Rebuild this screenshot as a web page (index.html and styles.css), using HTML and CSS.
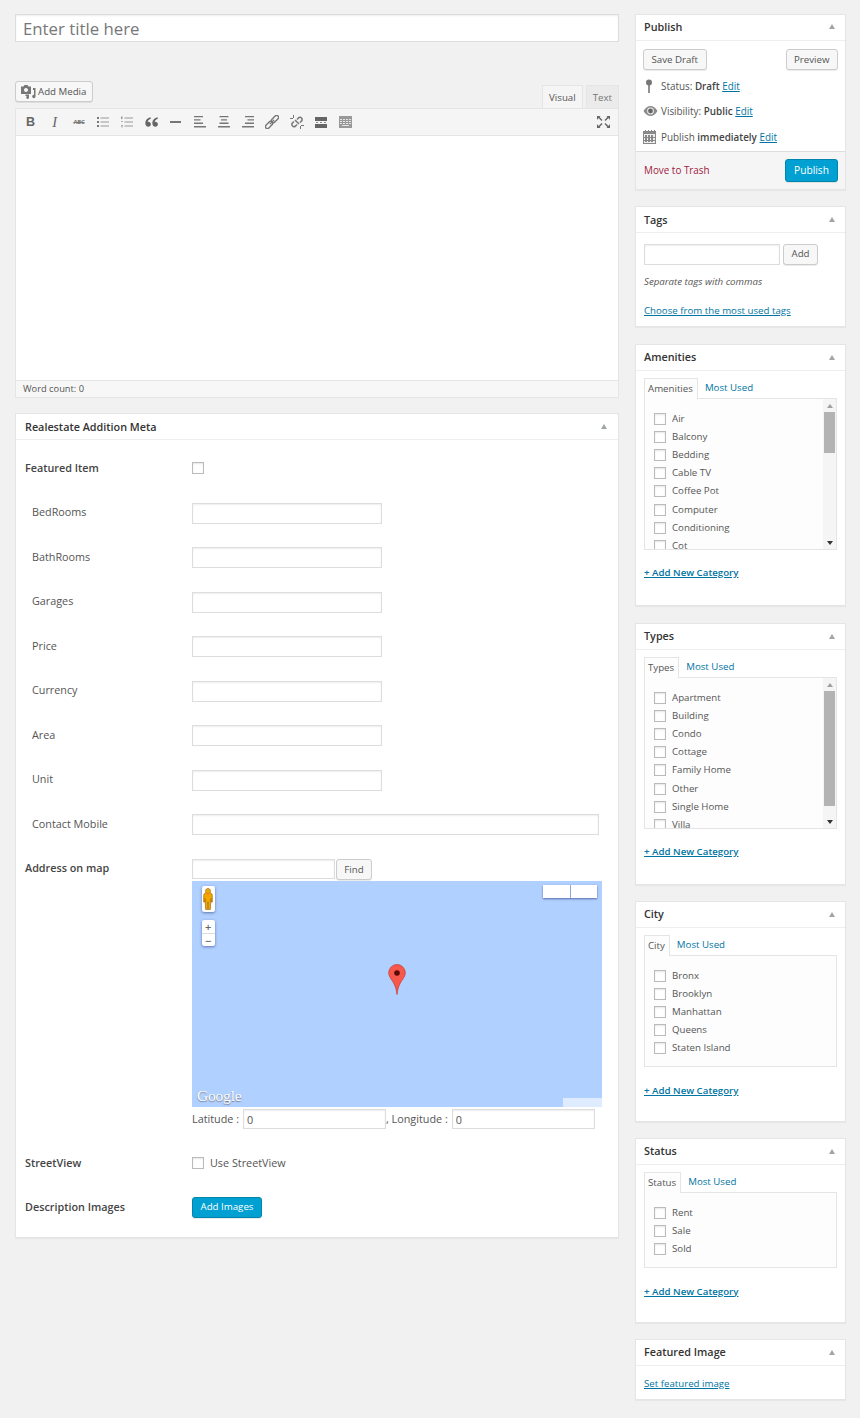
FILE: index.html
```html
<!DOCTYPE html>
<html lang="en">
<head>
<meta charset="utf-8">
<title>Add New Property</title>
<link rel="stylesheet" href="styles.css">
</head>
<body>
<div class="page">
<main class="main">
  <input class="title-input" type="text" placeholder="Enter title here">
  <div class="editor-top">
    <button class="btn media-btn"><svg class="media-icon" width="15" height="14" viewBox="0 0 15 14"><path fill="#777" fill-rule="evenodd" d="M0 1.500h2.500L3.500 0h3l1 1.500H10V9H0zM5 3a2 2 0 1 0 .01 0z"/><path fill="#777" d="M12 3h2.500v8.500a1.700 1.700 0 1 1-1.500-1.700V5h-1zM4.500 9.500h3.500v3a1.400 1.400 0 1 1-1.300-1.400V11H4.500z"/></svg>Add Media</button>
    <div class="tabs"><span class="tab tab-on">Visual</span><span class="tab">Text</span></div>
  </div>
  <section class="editor">
    <div class="toolbar">
      <span class="ti ti-b">B</span>
      <span class="ti ti-i">I</span>
      <span class="ti ti-abc">ABC</span>
      <span class="ti"><svg width="12" height="12" viewBox="0 0 12 12"><path fill="#777" d="M0 1h2v2H0zM0 5h2v2H0zM0 9h2v2H0z"/><path fill="#999" d="M3.500 1.500H12v1H3.500zM3.500 5.500H12v1H3.500zM3.500 9.500H12v1H3.500z"/></svg></span>
      <span class="ti"><svg width="12" height="12" viewBox="0 0 12 12"><path fill="#999" d="M0 .5h1.500v2.500H0zM0 5h2v.7H0zM0 9h2v.7H0zM0 10.500h2v.7H0zM3.500 1.500H12v1H3.500zM3.500 5.500H12v1H3.500zM3.500 9.500H12v1H3.500z"/></svg></span>
      <span class="ti"><svg width="13" height="10" viewBox="0 0 13 10"><path fill="#666" d="M5.500.3C2.500 1 .3 3 .3 6c0 2.300 1.200 3.700 3 3.700 1.500 0 2.600-1 2.600-2.500S4.800 4.700 3.400 4.700c-.3 0-.6 0-.8.1C3 3.500 4.200 2.500 5.900 1.800zM12.500.3C9.500 1 7.300 3 7.300 6c0 2.300 1.200 3.700 3 3.700 1.500 0 2.600-1 2.600-2.500s-1.100-2.500-2.500-2.500c-.3 0-.6 0-.8.1.4-1.300 1.600-2.300 3.300-3z"/></svg></span>
      <span class="ti"><svg width="11" height="2" viewBox="0 0 11 2"><path fill="#777" d="M0 0h11v2H0z"/></svg></span>
      <span class="ti"><svg width="12" height="12" viewBox="0 0 12 12"><path fill="#777" d="M0 0h9v1.300H0zM0 3.300h6.500v1.300H0zM0 6.600h9v1.300H0zM0 10h12v1.500H0z"/></svg></span>
      <span class="ti"><svg width="12" height="12" viewBox="0 0 12 12"><path fill="#777" d="M1.500 0h9v1.300h-9zM3 3.300h6v1.300H3zM1.500 6.600h9v1.300h-9zM0 10h12v1.500H0z"/></svg></span>
      <span class="ti"><svg width="12" height="12" viewBox="0 0 12 12"><path fill="#777" d="M3 0h9v1.300H3zM5.500 3.300H12v1.300H5.500zM3 6.600h9v1.300H3zM0 10h12v1.500H0z"/></svg></span>
      <span class="ti"><svg width="14" height="14" viewBox="0 0 14 14"><g fill="none" stroke="#777" stroke-width="1.400" transform="rotate(-45 7 7)"><rect x="-1.500" y="5" width="8.500" height="4" rx="2"/><rect x="7" y="5" width="8.500" height="4" rx="2"/><path d="M4 7h6"/></g></svg></span>
      <span class="ti"><svg width="14" height="14" viewBox="0 0 14 14"><path fill="none" stroke="#777" stroke-width="1.500" d="M7 4.500 9 2.500a2.300 2.300 0 0 1 3 3l-2 2M7 9.500 5 11.500a2.300 2.300 0 0 1-3-3l2-2M5 5 9 9"/><path fill="#777" d="M3 0h1v3H3zM0 3h3v1H0zM10 11h1v3h-1zM11 10h3v1h-3z"/></svg></span>
      <span class="ti"><svg width="12" height="11" viewBox="0 0 12 11"><path fill="#666" d="M0 0h12v4H0zM0 7h12v4H0z"/><path fill="#888" d="M1 5h2v1H1zM5 5h2v1H5zM9 5h2v1H9z"/></svg></span>
      <span class="ti"><svg width="13" height="12" viewBox="0 0 13 12"><path fill="#999" d="M0 0h13v12H0z"/><path fill="#e5e5e5" d="M1 3h2v1H1zM4 3h2v1H4zM7 3h2v1H7zM10 3h2v1h-2zM1 5h2v1H1zM4 5h2v1H4zM7 5h2v1H7zM10 5h2v1h-2zM1 7h2v1H1zM4 7h2v1H4zM7 7h2v1H7zM10 7h2v1h-2zM3 9h7v1H3z"/></svg></span>
      <span class="ti ti-full"><svg width="13" height="12" viewBox="0 0 13 12"><path fill="#666" d="M0 0h3.500L2.600 1l2.900 3-1 1-3-3L.5 3.500H0zM13 0H9.500l.9 1-2.900 3 1 1 3-3 1 1.500h.5zM0 12h3.500l-.9-1 2.900-3-1-1-3 3-1-1.500H0zM13 12H9.500l.9-1-2.900-3 1-1 3 3 1-1.500h.5z"/></svg></span>
    </div>
    <div class="editor-body"></div>
    <div class="word-count">Word count: 0</div>
  </section>

  <section class="box meta-box">
    <header class="box-head box-head-wide"><h2>Realestate Addition Meta</h2><i class="caret"></i></header>
    <div class="meta-body">
      <div class="row row-first"><label class="strong">Featured Item</label><span class="check"></span></div>
      <div class="row"><label class="sub">BedRooms</label><input class="field" type="text"></div>
      <div class="row"><label class="sub">BathRooms</label><input class="field" type="text"></div>
      <div class="row"><label class="sub">Garages</label><input class="field" type="text"></div>
      <div class="row"><label class="sub">Price</label><input class="field" type="text"></div>
      <div class="row"><label class="sub">Currency</label><input class="field" type="text"></div>
      <div class="row"><label class="sub">Area</label><input class="field" type="text"></div>
      <div class="row"><label class="sub">Unit</label><input class="field" type="text"></div>
      <div class="row"><label class="sub">Contact Mobile</label><input class="field field-wide" type="text"></div>
      <div class="map-row">
        <label class="strong map-label">Address on map</label>
        <div class="map-col">
          <div class="find"><input class="find-input" type="text"><button class="btn find-btn">Find</button></div>
          <div class="map">
            <div class="map-ctl pegman"><svg width="10" height="22" viewBox="0 0 10 22"><path fill="#f0a800" stroke="#a86a00" stroke-width=".7" d="M5 .5a2.500 2.500 0 0 1 1.800 4.200C8.500 5 9.300 6 9.300 7.500V14H8v-3.500L7.300 21.500H5.400V14H4.600v7.500H2.700L2 10.500V14H.7V7.500C.7 6 1.500 5 3.200 4.700A2.500 2.500 0 0 1 5 .5z"/><path fill="#f26d5b" d="M3.500 5h3L5 7z"/></svg></div>
            <div class="map-ctl zoom"><span>+</span><span class="zoom-minus">−</span></div>
            <div class="map-type"><span></span><span></span></div>
            <svg class="pin" width="18" height="31" viewBox="0 0 18 31"><path fill="#f7584c" stroke="#c8392e" stroke-width=".7" d="M9 .5a8.300 8.300 0 0 1 8.300 8.300c0 2.200-.9 4-2.300 6.100-2.400 3.600-5 7-6 15.600-1-8.600-3.600-12-6-15.600C1.600 12.800.7 11 .7 8.800A8.300 8.300 0 0 1 9 .5z"/><circle cx="9" cy="9" r="2.800" fill="#5a0b06"/></svg>
            <span class="google">Google</span>
            <div class="map-terms"></div>
          </div>
          <div class="latlng">
            <span>Latitude :</span><input class="ll" type="text" value="0"><span class="ll-sep">, Longitude :</span><input class="ll" type="text" value="0">
          </div>
        </div>
      </div>
      <div class="row row-sv"><label class="strong">StreetView</label><span class="check"></span><span class="check-text">Use StreetView</span></div>
      <div class="row row-img"><label class="strong">Description Images</label><button class="btn btn-primary">Add Images</button></div>
    </div>
  </section>
</main>

<aside class="side">
  <section class="box">
    <header class="box-head head-tight"><h2>Publish</h2><i class="caret"></i></header>
    <div class="pub-actions"><button class="btn">Save Draft</button><button class="btn">Preview</button></div>
    <div class="pub-line"><svg class="pub-icon" width="18" height="14" viewBox="0 0 18 14"><circle cx="6" cy="3.500" r="3" fill="#777"/><path fill="#777" d="M5.200 5h1.600v9H5.200z"/></svg><span>Status: <b>Draft</b> <a href="#">Edit</a></span></div>
    <div class="pub-line"><svg class="pub-icon" width="18" height="12" viewBox="0 0 18 12"><path fill="#8a8a8a" d="M.5 6C2.500 2.500 5 1 7.500 1s5 1.500 7 5c-2 3.500-4.500 5-7 5s-5-1.500-7-5z"/><circle cx="7.500" cy="6" r="3.400" fill="#eee"/><circle cx="7.500" cy="6" r="2.400" fill="#666"/></svg><span>Visibility: <b>Public</b> <a href="#">Edit</a></span></div>
    <div class="pub-line"><svg class="pub-icon" width="18" height="14" viewBox="0 0 18 14"><path fill="#888" d="M0 1h2V0h1v1h2V0h1v1h2V0h1v1h2V0h1v1h1v13H0z"/><path fill="#eee" d="M1 4h11v9H1z"/><path fill="#888" d="M2 5h2v7H2zM5 5h2v7H5zM8 5h2v7H8zM1 7h11v1H1zM1 10h11v1H1z"/></svg><span>Publish <b>immediately</b> <a href="#">Edit</a></span></div>
    <footer class="pub-foot"><a class="trash" href="#">Move to Trash</a><button class="btn btn-primary btn-publish">Publish</button></footer>
  </section>

  <section class="box box-tags">
    <header class="box-head"><h2>Tags</h2><i class="caret"></i></header>
    <div class="tag-add"><input class="tag-input" type="text"><button class="btn">Add</button></div>
    <p class="hint">Separate tags with commas</p>
    <a class="link-u tag-link" href="#">Choose from the most used tags</a>
  </section>

  <section class="box box-amen">
    <header class="box-head"><h2>Amenities</h2><i class="caret"></i></header>
    <div class="tax">
      <div class="tax-tabs"><span class="tax-tab">Amenities</span><a class="tax-alt" href="#">Most Used</a></div>
      <div class="tax-panel tax-scroll">
        <ul class="tax-list">
          <li><span class="check"></span>Air</li><li><span class="check"></span>Balcony</li><li><span class="check"></span>Bedding</li><li><span class="check"></span>Cable TV</li><li><span class="check"></span>Coffee Pot</li><li><span class="check"></span>Computer</li><li><span class="check"></span>Conditioning</li><li><span class="check"></span>Cot</li>
        </ul>
        <div class="scrollbar"><i class="sb-up"></i><div class="sb-track"><div class="sb-thumb sb-thumb-s"></div></div><i class="sb-down"></i></div>
      </div>
      <a class="link-u add-cat" href="#">+ Add New Category</a>
    </div>
  </section>

  <section class="box box-amen">
    <header class="box-head"><h2>Types</h2><i class="caret"></i></header>
    <div class="tax">
      <div class="tax-tabs"><span class="tax-tab">Types</span><a class="tax-alt" href="#">Most Used</a></div>
      <div class="tax-panel tax-scroll">
        <ul class="tax-list">
          <li><span class="check"></span>Apartment</li><li><span class="check"></span>Building</li><li><span class="check"></span>Condo</li><li><span class="check"></span>Cottage</li><li><span class="check"></span>Family Home</li><li><span class="check"></span>Other</li><li><span class="check"></span>Single Home</li><li><span class="check"></span>Villa</li>
        </ul>
        <div class="scrollbar"><i class="sb-up"></i><div class="sb-track"><div class="sb-thumb sb-thumb-l"></div></div><i class="sb-down"></i></div>
      </div>
      <a class="link-u add-cat" href="#">+ Add New Category</a>
    </div>
  </section>

  <section class="box box-city">
    <header class="box-head"><h2>City</h2><i class="caret"></i></header>
    <div class="tax">
      <div class="tax-tabs"><span class="tax-tab">City</span><a class="tax-alt" href="#">Most Used</a></div>
      <div class="tax-panel">
        <ul class="tax-list">
          <li><span class="check"></span>Bronx</li><li><span class="check"></span>Brooklyn</li><li><span class="check"></span>Manhattan</li><li><span class="check"></span>Queens</li><li><span class="check"></span>Staten Island</li>
        </ul>
      </div>
      <a class="link-u add-cat" href="#">+ Add New Category</a>
    </div>
  </section>

  <section class="box box-status">
    <header class="box-head"><h2>Status</h2><i class="caret"></i></header>
    <div class="tax">
      <div class="tax-tabs"><span class="tax-tab">Status</span><a class="tax-alt" href="#">Most Used</a></div>
      <div class="tax-panel">
        <ul class="tax-list">
          <li><span class="check"></span>Rent</li><li><span class="check"></span>Sale</li><li><span class="check"></span>Sold</li>
        </ul>
      </div>
      <a class="link-u add-cat" href="#">+ Add New Category</a>
    </div>
  </section>

  <section class="box box-feat">
    <header class="box-head"><h2>Featured Image</h2><i class="caret"></i></header>
    <a class="link-u feat-link" href="#">Set featured image</a>
  </section>
</aside>
</div>
</body>
</html>
```

FILE: styles.css
```css
* { box-sizing: border-box; }
html, body { margin: 0; padding: 0; }
body {
  background: #f1f1f1;
  color: #555;
  font-family: "Open Sans", "Liberation Sans", sans-serif;
  font-size: 10.800px;
  line-height: 16px;
}
a { color: #0074a2; }
ul { list-style: none; margin: 0; padding: 0; }
input { font-family: inherit; outline: none; margin: 0; background: #fff; border: 1px solid #ddd; box-shadow: inset 0 1px 2px rgba(0,0,0,.07); }

.page { display: flex; align-items: flex-start; gap: 16px; padding: 14px 14px 0 15px; height: 1418px; overflow: hidden; }
.main { width: 604px; flex: none; }
.side { width: 211px; flex: none; display: flex; flex-direction: column; }

.title-input { display: block; width: 100%; height: 28px; font-size: 16.800px; padding: 0 7px; color: #555; }
.title-input::placeholder { color: #777; opacity: 1; }

.btn {
  font-family: inherit;
  font-size: 9.700px;
  height: 21px;
  line-height: 18px;
  padding: 0 7.500px;
  color: #555;
  background: #f7f7f7;
  border: 1px solid #ccc;
  border-radius: 3px;
  box-shadow: 0 1px 0 rgba(0,0,0,.08);
}
.btn-primary { background: #00a0d2; border-color: #0085ad; color: #fff; }

.editor-top { display: flex; justify-content: space-between; align-items: flex-end; height: 66px; }
.media-btn { display: flex; align-items: center; gap: 2px; padding: 0 5px; margin-bottom: 6px; width: 78px; white-space: nowrap; }
.media-icon { flex: none; }
.tabs { display: flex; gap: 3px; }
.tab { height: 23px; line-height: 23px; padding: 0 6px; font-size: 9.700px; color: #777; background: #ebebeb; border: 1px solid #e5e5e5; border-bottom: 0; }
.tab-on { background: #f5f5f5; color: #555; }

.editor { background: #fff; border: 1px solid #e5e5e5; }
.toolbar { display: flex; align-items: center; height: 27px; background: #f5f5f5; border-bottom: 1px solid #e5e5e5; padding-left: 2.500px; }
.ti { width: 24.200px; height: 24px; display: flex; align-items: center; justify-content: center; color: #666; flex: none; }
.ti-b { font-weight: 700; font-size: 12.500px; font-family: "Liberation Sans", sans-serif; }
.ti-i { font-style: italic; font-size: 14.500px; font-family: "Liberation Serif", serif; }
.ti-abc { font-size: 6px; letter-spacing: -.3px; font-weight: 700; text-decoration: line-through; color: #777; }
.ti-full { margin-left: auto; margin-right: 2px; }
.editor-body { height: 244px; }
.word-count { height: 17px; line-height: 16px; background: #f7f7f7; border-top: 1px solid #e5e5e5; font-size: 9.300px; padding-left: 7px; }

.box { background: #fff; border: 1px solid #e5e5e5; box-shadow: 0 1px 1px rgba(0,0,0,.04); }
.box-head { height: 26px; display: flex; align-items: center; justify-content: space-between; padding: 0 8px; border-bottom: 1px solid #eee; }
.box-head-wide { padding: 0 9px; }
.head-tight { padding-bottom: 2px; }
.box-head h2 { margin: 0; font-size: 10.800px; font-weight: 600; color: #333; line-height: 16px; }
.caret { width: 0; height: 0; border-left: 3.500px solid transparent; border-right: 3.500px solid transparent; border-bottom: 5px solid #a0a5aa; margin-right: 2px; }

.meta-box { margin-top: 15px; height: 825px; }
.meta-body { padding: 0 9px; }
.row { display: flex; align-items: center; height: 44.500px; }
.row-first { margin-top: 5.500px; }
.row label { width: 167px; flex: none; }
.strong { font-weight: 600; color: #444; }
.sub { padding-left: 7px; }
.field { width: 190px; height: 21px; margin-top: 2px; }
.field-wide { width: 407px; }
.check { display: inline-block; width: 12px; height: 12px; border: 1px solid #bbb; background: #fff; box-shadow: inset 0 1px 2px rgba(0,0,0,.1); flex: none; }
.check-text { margin-left: 6px; }

.map-row { display: flex; margin-top: 13.400px; }
.map-label { width: 167px; flex: none; line-height: 18px; }
.map-col { width: 410px; flex: none; }
.find { display: flex; gap: 1px; height: 22px; }
.find-input { width: 143px; height: 20px; }
.find-btn { width: 36px; height: 21px; padding: 0; }
.map { position: relative; height: 226px; background: #b0d0ff; overflow: hidden; }
.map-ctl { position: absolute; left: 10px; width: 12.500px; background: #fff; border-radius: 2px; box-shadow: 0 1px 3px rgba(0,0,80,.45); display: flex; flex-direction: column; align-items: center; }
.pegman { top: 5px; height: 26px; justify-content: center; }
.zoom { top: 39px; height: 26px; color: #666; font-size: 11px; line-height: 13px; font-weight: 600; }
.zoom span { height: 13px; width: 100%; text-align: center; }
.zoom-minus { border-top: 1px solid #ddd; }
.map-type { position: absolute; top: 4px; left: 351px; width: 54px; height: 13px; display: flex; gap: 1px; box-shadow: 0 1px 2px rgba(0,0,80,.5); background: #8ea9d8; }
.map-type span { flex: 1; background: #fff; }
.pin { position: absolute; left: 196px; top: 83px; }
.google { position: absolute; left: 5px; bottom: 3px; font-family: "Liberation Serif", serif; font-size: 15.500px; line-height: 17px; letter-spacing: -.2px; color: #fff; text-shadow: 0 1px 1px #778; }
.map-terms { position: absolute; right: 0; bottom: 0; width: 39px; height: 9px; background: rgba(255,255,255,.6); }
.latlng { display: flex; align-items: center; height: 22px; white-space: nowrap; margin-top: 1px; }
.ll { width: 143px; height: 20px; font-size: 10.800px; color: #555; padding: 0 3px; margin-left: 4px; }
.row-sv { margin-top: 10.500px; }
.row-img { height: 44px; }
.row-img .btn { width: 70px; padding: 0; }

.pub-actions { display: flex; justify-content: space-between; padding: 8px 7px 0; height: 32px; }
.pub-line { display: flex; align-items: center; height: 25.500px; padding-left: 7px; font-size: 9.900px; }
.pub-line b { font-weight: 600; color: #444; }
.pub-icon { flex: none; }
.pub-foot { display: flex; justify-content: space-between; align-items: center; height: 38.500px; margin-top: 1px; padding: 0 7px 0 8px; background: #f5f5f5; border-top: 1px solid #ddd; }
.trash { color: #a02040; text-decoration: none; font-size: 9.900px; }
.btn-publish { height: 23px; width: 53px; padding: 0; font-size: 10.200px; }

.box-tags { margin-top: 16px; height: 120.500px; }
.tag-add { display: flex; gap: 3px; padding: 10.500px 8px 0 8px; }
.tag-input { width: 136px; height: 21px; }
.tag-add .btn { width: 35px; padding: 0; }
.hint { margin: 9px 0 0 8px; font-style: italic; font-size: 9.700px; }
.link-u { font-size: 9.700px; text-decoration: underline; }
.tag-link { display: block; margin: 13px 0 0 8px; }

.box-amen { margin-top: 17px; height: 262px; }
.box-city { margin-top: 16px; height: 221px; }
.box-status { margin-top: 16px; height: 185px; }
.box-feat { margin-top: 16px; height: 61px; }
.tax { padding: 6px 8px 0; }
.tax-tabs { display: flex; align-items: flex-end; height: 21px; }
.tax-tab { height: 21px; line-height: 19px; padding: 0 4px 0 3px; font-size: 9.700px; background: #fdfdfd; border: 1px solid #e5e5e5; border-bottom: 0; margin-bottom: -1px; position: relative; z-index: 1; }
.tax-alt { height: 20px; line-height: 19px; padding: 0 7px; font-size: 9.700px; color: #0074a2; text-decoration: none; }
.tax-panel { border: 1px solid #e5e5e5; background: #fdfdfd; padding: 11px 0 9px 9px; font-size: 9.700px; }
.tax-scroll { display: flex; height: 152px; padding: 0 0 0 9px; overflow: hidden; }
.tax-scroll .tax-list { flex: 1; padding-top: 11px; }
.tax-list li { display: flex; align-items: center; height: 18.200px; white-space: nowrap; }
.tax-list .check { margin-right: 6px; }
.scrollbar { width: 13px; flex: none; height: 150px; background: #f5f5f5; display: flex; flex-direction: column; align-items: center; }
.sb-up, .sb-down { display: block; width: 0; height: 0; border-left: 3px solid transparent; border-right: 3px solid transparent; flex: none; }
.sb-up { border-bottom: 4px solid #a0a0a0; margin: 5px 0 4px; }
.sb-down { border-top: 4px solid #333; margin: 4px 0 4px; }
.sb-track { flex: 1; width: 100%; padding: 0 1px; }
.sb-thumb { background: #b3b3b3; width: 100%; }
.sb-thumb-s { height: 41px; }
.sb-thumb-l { height: 115px; }
.add-cat { display: inline-block; margin-top: 15.500px; font-weight: 600; }
.feat-link { display: block; margin: 10px 0 0 8px; }
```
